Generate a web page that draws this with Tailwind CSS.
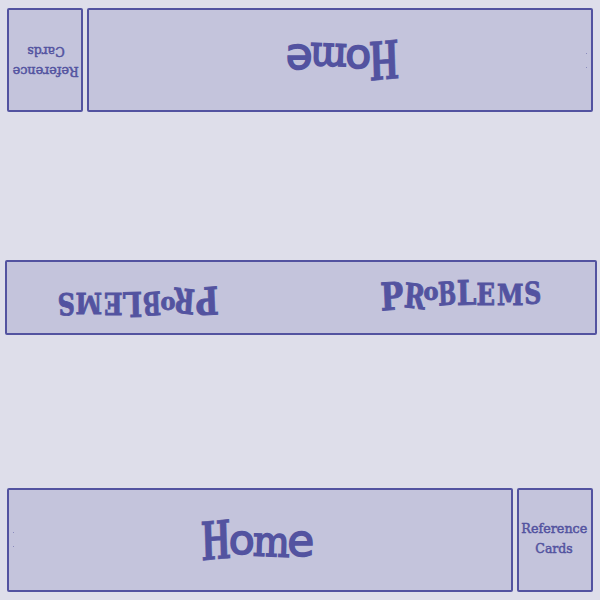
<!DOCTYPE html>
<html lang="en">
<head>
<meta charset="utf-8">
<title>Play mat</title>
<script src="https://cdn.jsdelivr.net/npm/@tailwindcss/browser@4"></script>
</head>
<body class="bg-[#dedeea]">
<main class="w-[600px] h-[600px] flex flex-col justify-between pt-2 pb-2 overflow-hidden text-[#5353a0] font-['DejaVu_Serif',serif]">
  <!-- Opposite player's side -->
  <section class="flex gap-1 h-[104px] px-[7px] rotate-180">
    <div class="relative w-[506px] rounded-xs border-2 border-current bg-[#c4c4dc] flex items-center justify-center">
      <i class="absolute left-[4px] top-[42px] size-px bg-current/50"></i><i class="absolute left-[4px] top-[56px] size-px bg-current/50"></i>
      <svg class="w-[130px] h-[60px] -translate-x-[5px] overflow-visible" viewBox="0 0 130 60" fill="currentColor" stroke="currentColor" stroke-width="1.6" font-size="42"><text><tspan x="11.5" y="50.5" font-size="53" font-weight="700" stroke-width=".6" textLength="30" lengthAdjust="spacingAndGlyphs" rotate="-3">H</tspan><tspan class="font-['DejaVu_Sans',sans-serif]" x="38.8" y="44" font-size="40" textLength="26" lengthAdjust="spacingAndGlyphs">o</tspan><tspan x="62.5" y="45.5" textLength="37" lengthAdjust="spacingAndGlyphs" rotate="2">m</tspan><tspan class="font-['DejaVu_Sans',sans-serif]" x="97.3" y="45.5" font-size="44" textLength="27" lengthAdjust="spacingAndGlyphs">e</tspan></text></svg>
    </div>
    <div class="w-[76px] rounded-xs border-2 border-current bg-[#c4c4dc] flex items-center justify-center">
      <svg class="w-[72px] h-[100px] shrink-0" viewBox="0 0 72 100" fill="currentColor" stroke="currentColor" stroke-width=".5" font-size="13.5"><text x="2.3" y="43.3" textLength="66" lengthAdjust="spacingAndGlyphs">Reference</text><text x="16.3" y="62.8" textLength="37.5" lengthAdjust="spacingAndGlyphs">Cards</text></svg>
    </div>
  </section>

  <!-- Shared problem row -->
  <section class="ml-[5px] mb-[5px] w-[592px] h-[75px] rounded-xs border-2 border-current bg-[#c4c4dc] flex justify-between">
    <svg class="w-[225px] h-[71px] rotate-180 -translate-x-[4px] translate-y-[2px] overflow-visible" viewBox="0 0 225 71" fill="currentColor" stroke="currentColor" stroke-width=".9" font-weight="700"><text><tspan x="10" y="48.5" font-size="38" textLength="23" lengthAdjust="spacingAndGlyphs" rotate="-3">P</tspan><tspan x="32.5" y="45" font-size="34" textLength="21" lengthAdjust="spacingAndGlyphs" rotate="5">R</tspan><tspan x="52.5" y="38" font-size="25" textLength="15" lengthAdjust="spacingAndGlyphs">o</tspan><tspan x="67.5" y="43.5" font-size="32" textLength="18" lengthAdjust="spacingAndGlyphs" rotate="-3">B</tspan><tspan x="86" y="43" font-size="34" textLength="19.5" lengthAdjust="spacingAndGlyphs" rotate="-1">L</tspan><tspan x="105.5" y="42.5" font-size="29" textLength="18.5" lengthAdjust="spacingAndGlyphs">E</tspan><tspan x="126" y="42.5" font-size="27" textLength="26.5" lengthAdjust="spacingAndGlyphs">M</tspan><tspan x="153.5" y="42" font-size="30" textLength="17" lengthAdjust="spacingAndGlyphs" rotate="-2">S</tspan></text></svg>
    <svg class="w-[225px] h-[71px] translate-x-px overflow-visible" viewBox="0 0 225 71" fill="currentColor" stroke="currentColor" stroke-width=".9" font-weight="700"><text><tspan x="10" y="48.5" font-size="38" textLength="23" lengthAdjust="spacingAndGlyphs" rotate="-3">P</tspan><tspan x="32.5" y="45" font-size="34" textLength="21" lengthAdjust="spacingAndGlyphs" rotate="5">R</tspan><tspan x="52.5" y="38" font-size="25" textLength="15" lengthAdjust="spacingAndGlyphs">o</tspan><tspan x="67.5" y="43.5" font-size="32" textLength="18" lengthAdjust="spacingAndGlyphs" rotate="-3">B</tspan><tspan x="86" y="43" font-size="34" textLength="19.5" lengthAdjust="spacingAndGlyphs" rotate="-1">L</tspan><tspan x="105.5" y="42.5" font-size="29" textLength="18.5" lengthAdjust="spacingAndGlyphs">E</tspan><tspan x="126" y="42.5" font-size="27" textLength="26.5" lengthAdjust="spacingAndGlyphs">M</tspan><tspan x="153.5" y="42" font-size="30" textLength="17" lengthAdjust="spacingAndGlyphs" rotate="-2">S</tspan></text></svg>
  </section>

  <!-- Near player's side -->
  <section class="flex gap-1 h-[104px] px-[7px]">
    <div class="relative w-[506px] rounded-xs border-2 border-current bg-[#c4c4dc] flex items-center justify-center">
      <i class="absolute left-[4px] top-[42px] size-px bg-current/50"></i><i class="absolute left-[4px] top-[56px] size-px bg-current/50"></i>
      <svg class="w-[130px] h-[60px] -translate-x-[5px] overflow-visible" viewBox="0 0 130 60" fill="currentColor" stroke="currentColor" stroke-width="1.6" font-size="42"><text><tspan x="11.5" y="50.5" font-size="53" font-weight="700" stroke-width=".6" textLength="30" lengthAdjust="spacingAndGlyphs" rotate="-3">H</tspan><tspan class="font-['DejaVu_Sans',sans-serif]" x="38.8" y="44" font-size="40" textLength="26" lengthAdjust="spacingAndGlyphs">o</tspan><tspan x="62.5" y="45.5" textLength="37" lengthAdjust="spacingAndGlyphs" rotate="2">m</tspan><tspan class="font-['DejaVu_Sans',sans-serif]" x="97.3" y="45.5" font-size="44" textLength="27" lengthAdjust="spacingAndGlyphs">e</tspan></text></svg>
    </div>
    <div class="w-[76px] rounded-xs border-2 border-current bg-[#c4c4dc] flex items-center justify-center">
      <svg class="w-[72px] h-[100px] shrink-0" viewBox="0 0 72 100" fill="currentColor" stroke="currentColor" stroke-width=".5" font-size="13.5"><text x="2.3" y="43.3" textLength="66" lengthAdjust="spacingAndGlyphs">Reference</text><text x="16.3" y="62.8" textLength="37.5" lengthAdjust="spacingAndGlyphs">Cards</text></svg>
    </div>
  </section>
</main>
</body>
</html>
